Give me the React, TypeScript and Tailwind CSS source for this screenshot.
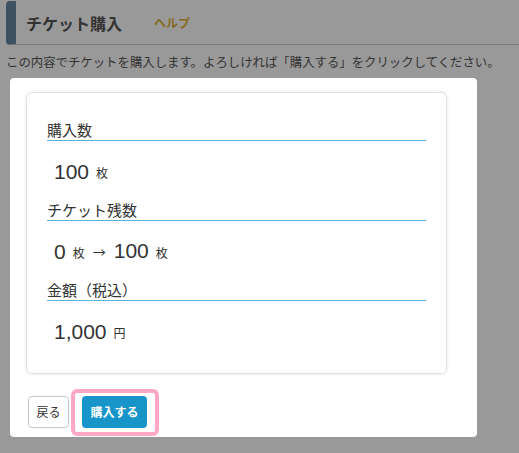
const jp = "font-['Meiryo','Noto_Sans_CJK_JP',sans-serif]";

function Section({ label, children }: { label: string; children: React.ReactNode }) {
  return (
    <div className="mb-[14px]">
      <div className="h-[21px] border-b border-[#5ab2db] text-[15px] leading-[20px] text-[#333]">
        {label}
      </div>
      <div className="mt-[15px] flex h-[30px] items-center pl-[7px] text-[#333]">{children}</div>
    </div>
  );
}

function Num({ v }: { v: string }) {
  return <span className="font-['Liberation_Sans',sans-serif] text-[21px] leading-none">{v}</span>;
}

function Unit({ u }: { u: string }) {
  return <span className="ml-[7px] mt-[3px] text-[12px] leading-none">{u}</span>;
}

export default function App() {
  return (
    <div className={`h-[453px] w-[519px] overflow-hidden bg-[#999999] pt-px ${jp}`}>
      <div className="ml-[6px] flex h-[44px] items-center rounded-l-[4px] border-b border-l-[10px] border-b-[#7f7f7f] border-l-[#3d5163] pl-[10px]">
        <h1 className="text-[16px] font-bold text-[#333]">チケット購入</h1>
        <span className="ml-[32px] text-[12px] font-bold text-[#836a1e]">ヘルプ</span>
      </div>

      <p className="mt-[8px] pl-[6px] text-[12.4px] leading-[18px] whitespace-nowrap text-[#333]">
        この内容でチケットを購入します。よろしければ「購入する」をクリックしてください。
      </p>

      <div className="ml-[10px] mt-[7px] h-[359px] w-[467px] rounded-[4px] bg-white px-[16px] pt-[14px]">
        <div className="w-[421px] rounded-[6px] border border-[#e2e2e2] px-[20px] pb-[13px] pt-[27px] shadow-[0_0_3px_rgba(0,0,0,0.12)]">
          <Section label="購入数">
            <Num v="100" />
            <Unit u="枚" />
          </Section>
          <Section label="チケット残数">
            <Num v="0" />
            <Unit u="枚" />
            <span className="ml-[8px] mt-[2px] text-[13px]">→</span>
            <span className="ml-[8px]">
              <Num v="100" />
            </span>
            <Unit u="枚" />
          </Section>
          <Section label="金額（税込）">
            <Num v="1,000" />
            <Unit u="円" />
          </Section>
        </div>

        <div className="ml-[2px] mt-[22px] flex items-center gap-[13px]">
          <button className="h-[32px] w-[41px] rounded-[4px] border border-[#c8c8c8] bg-white text-[12px] text-[#333]">
            戻る
          </button>
          <div className="relative">
            <button className="h-[32px] w-[65px] rounded-[4px] bg-[#1795c8] text-[12px] font-bold text-white">
              購入する
            </button>
            <span className="pointer-events-none absolute -bottom-[8px] -left-[11px] -right-[12px] -top-[7px] rounded-[6px] border-[4px] border-[#ffa8c6]" />
          </div>
        </div>
      </div>
    </div>
  );
}
